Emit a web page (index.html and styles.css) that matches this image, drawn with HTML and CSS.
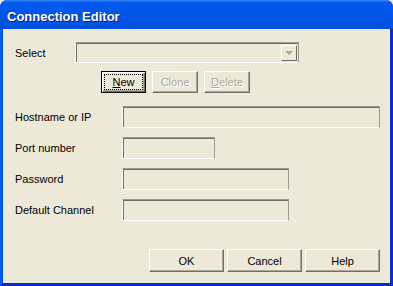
FILE: index.html
```html
<!DOCTYPE html>
<html lang="en">
<head>
    <meta charset="UTF-8">
    <title>Connection Editor</title>
    <link rel="stylesheet" href="styles.css">
</head>
<body>
    <div class="window">
        <div class="titlebar">Connection Editor</div>
        <div class="client">
            <div class="row-select">
                <span class="label label-select">Select</span>
                <div class="combo"><span class="combo-btn"><span class="arrow"></span></span></div>
            </div>
            <div class="actions">
                <button class="btn btn-default"><span class="focus"><u>N</u>ew</span></button>
                <button class="btn btn-disabled">Clone</button>
                <button class="btn btn-disabled"><u>D</u>elete</button>
            </div>
            <div class="form">
                <span class="label">Hostname or IP</span><div class="field field-wide"></div>
                <span class="label">Port number</span><div class="field field-short"></div>
                <span class="label">Password</span><div class="field field-mid"></div>
                <span class="label">Default Channel</span><div class="field field-mid"></div>
            </div>
            <div class="footer">
                <button class="btn btn-big">OK</button>
                <button class="btn btn-big">Cancel</button>
                <button class="btn btn-big">Help</button>
            </div>
        </div>
    </div>
</body>
</html>
```

FILE: styles.css
```css
body{
    margin: 0;
    background: #ece9d8;
    font-family: "Liberation Sans", Arial, sans-serif;
    font-size: 11px;
}
.window{
    width: 393px;
    height: 286px;
    box-sizing: border-box;
    background: #0054e3;
    border-radius: 7px 7px 0 0;
    border-left: 3px solid #0058ee;
    border-right: 3px solid #0a2fc4;
    border-bottom: 3px solid #0031c6;
    display: flex;
    flex-direction: column;
}
.titlebar{
    height: 29px;
    box-sizing: border-box;
    padding: 9px 0 0 7px;
    margin: 0 -3px;
    color: #fff;
    font-weight: bold;
    font-size: 13px;
    text-shadow: 1px 1px 0 #0a1e6e;
    background: linear-gradient(#3d8cf8 0, #0a5ef0 2px, #0058ee 6px, #0054e3 22px, #0050d8 29px);
    border-radius: 7px 7px 0 0;
}
.client{
    flex: 1;
    background: #ece9d8;
    padding: 13px 10px 0 12px;
    color: #000;
}
.row-select{
    display: flex;
    align-items: center;
    height: 21px;
}
.label-select{
    width: 60px;
}
.combo,.field{
    box-sizing: border-box;
    height: 22px;
    border: 1px solid;
    border-color: #9d9a8c #9d9a8c #fff #fff;
    box-shadow: inset 1px 1px 0 #716f64;
    background: #ece9d8;
}
.combo{
    width: 224px;
    height: 21px;
    display: flex;
    justify-content: flex-end;
    padding: 2px 1px 1px 2px;
}
.combo-btn{
    width: 16px;
    height: 16px;
    box-sizing: border-box;
    border: 1px solid;
    border-color: #fff #716f64 #716f64 #fff;
    display: flex;
    align-items: center;
    justify-content: center;
}
.arrow{
    width: 0;
    height: 0;
    border-left: 4px solid transparent;
    border-right: 4px solid transparent;
    border-top: 4px solid #aca899;
}
.actions{
    display: flex;
    gap: 6px;
    margin-top: 8px;
    padding-left: 86px;
}
.btn{
    box-sizing: border-box;
    height: 22px;
    width: 45px;
    padding: 0;
    font-family: inherit;
    font-size: 11px;
    color: #000;
    background: #ece9d8;
    border: 1px solid;
    border-color: #fff #716f64 #716f64 #fff;
    box-shadow: inset -1px -1px 0 #aca899;
}
.btn-default{
    border: 1px solid #000;
    box-shadow: inset 1px 1px 0 #fff, inset -1px -1px 0 #716f64, inset -2px -2px 0 #aca899;
    padding: 2px;
}
.focus{
    display: block;
    height: 100%;
    box-sizing: border-box;
    border: 1px dotted #000;
    line-height: 14px;
}
.btn-disabled{
    width: 46px;
    color: #aca899;
    text-shadow: 1px 1px 0 #fff;
}
.form{
    display: grid;
    grid-template-columns: 107px auto;
    align-items: center;
    row-gap: 9px;
    margin-top: 13px;
}
.field-wide{
    width: 258px;
}
.field-short{
    width: 93px;
}
.field-mid{
    width: 167px;
}
.footer{
    display: flex;
    gap: 3px;
    margin-top: 28px;
    padding-left: 134px;
}
.btn-big{
    width: 75px;
    height: 23px;
}
```
